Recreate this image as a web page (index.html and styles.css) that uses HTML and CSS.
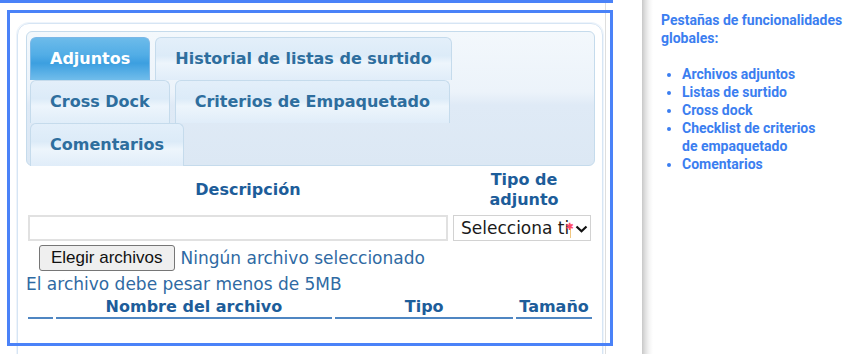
FILE: index.html
```html
<!DOCTYPE html>
<html lang="es">
<head>
    <meta charset="UTF-8">
    <title>Adjuntos</title>
    <link rel="stylesheet" href="styles.css">
</head>
<body>
<div class="page">
    <div class="main">
        <div class="widget">
            <ul class="tabs">
                <li class="tab active">Adjuntos</li>
                <li class="tab">Historial de listas de surtido</li>
                <li class="tab">Cross Dock</li>
                <li class="tab">Criterios de Empaquetado</li>
                <li class="tab">Comentarios</li>
            </ul>
            <div class="panel">
                <table class="upload">
                    <tr>
                        <th class="desc">Descripción</th>
                        <th class="tipo">Tipo de<br>adjunto</th>
                    </tr>
                    <tr>
                        <td><input type="text" class="text"></td>
                        <td>
                            <div class="pick">
                                <select class="sel">
                                    <option>Selecciona tipo</option>
                                </select>
                                <span class="req">&#10033;</span>
                                <svg class="chev" width="13" height="8" viewBox="0 0 13 8"><path d="M1.5 1.5 L6.5 6.3 L11.5 1.5" fill="none" stroke="#111" stroke-width="2.2"/></svg>
                            </div>
                        </td>
                    </tr>
                </table>
                <div class="file_row">
                    <button class="file_btn">Elegir archivos</button>
                    <span>Ningún archivo seleccionado</span>
                </div>
                <p class="hint">El archivo debe pesar menos de 5MB</p>
                <table class="files">
                    <tr>
                        <th class="c0"></th>
                        <th class="c1">Nombre del archivo</th>
                        <th class="c2">Tipo</th>
                        <th class="c3">Tamaño</th>
                    </tr>
                </table>
            </div>
        </div>
    </div>

    <div class="notes">
        <p class="notes_title">Pestañas de funcionalidades globales:</p>
        <ul class="notes_list">
            <li>Archivos adjuntos</li>
            <li>Listas de surtido</li>
            <li>Cross dock</li>
            <li>Checklist de criterios<br>de empaquetado</li>
            <li>Comentarios</li>
        </ul>
    </div>

    <div class="mark mark_top"></div>
    <div class="mark mark_main"></div>
</div>
</body>
</html>
```

FILE: styles.css
```css
* {
    margin: 0;
    padding: 0;
    box-sizing: border-box;
}
body {
    margin: 0;
    background: #fff;
    font-family: "DejaVu Sans", sans-serif;
    overflow: hidden;
}
.page {
    position: relative;
    display: flex;
    width: 857px;
    height: 354px;
    overflow: hidden;
}
.main {
    width: 606px;
    flex: none;
    border-right: 1px solid #dedede;
    padding: 23px 2px 0 17px;
}
.widget {
    width: 586px;
    height: 346px;
    border: 1px solid #d6e5f4;
    border-radius: 12px;
    box-shadow: 0 0 0 1px #eef4fb;
    padding: 7px 7px 0 8px;
}

/* tabs */
.tabs {
    list-style: none;
    display: flex;
    flex-wrap: wrap;
    align-content: flex-start;
    height: 135px;
    padding: 5px 20px 0 3px;
    border: 1px solid #c5dbec;
    border-radius: 6px;
    background: linear-gradient(#f3f8fc 0%, #ecf3fa 45%, #dfeaf6 55%, #dce8f4 100%);
}
.tab {
    height: 43px;
    line-height: 42px;
    padding: 0 19px;
    margin-right: 5px;
    font-size: 16px;
    font-weight: bold;
    color: #2e6e9e;
    border: 1px solid #c5dbec;
    border-bottom: none;
    border-radius: 6px 6px 0 0;
    background: linear-gradient(#e3effa 0%, #dcebf8 42%, #edf5fc 60%, #e0edf9 100%);
    white-space: nowrap;
}
.tab.active {
    color: #fff;
    border-color: #79b7e7;
    background: linear-gradient(#6cbbea 0%, #52ade6 40%, #3c9fe0 60%, #71bdeb 100%);
}

/* panel */
.panel {
    color: #2f6aa3;
    font-size: 17px;
}
.upload {
    border-spacing: 2px;
    margin-left: -1px;
}
.upload th {
    font-size: 16px;
    line-height: 20px;
    color: #1d5d9a;
    padding: 2px 0;
    height: 44px;
}
.upload td {
    padding: 1px;
}
.desc {
    width: 422px;
    padding-left: 20px !important;
}
.tipo {
    padding-left: 5px !important;
}
.text {
    display: block;
    width: 420px;
    height: 26px;
    border: 2px solid #e1e1e1;
    background: #fff;
}
.pick {
    position: relative;
    width: 138px;
    height: 26px;
    margin-left: 1px;
}
.sel {
    appearance: none;
    -webkit-appearance: none;
    width: 138px;
    height: 26px;
    border: 1px solid #d2d2d2;
    background: #fff;
    padding: 0 19px 0 7px;
    font-family: "DejaVu Sans", sans-serif;
    font-size: 17px;
    color: #1b1b1b;
}
.req {
    position: absolute;
    right: 17px;
    top: 6px;
    font-size: 10px;
    color: #ff4a6a;
}
.chev {
    position: absolute;
    right: 3px;
    top: 10px;
}
.file_row {
    display: flex;
    align-items: center;
    height: 26px;
    margin-top: 1px;
}
.file_btn {
    margin-left: 13px;
    margin-right: 6px;
    height: 26px;
    padding: 0 11px;
    font-family: "Liberation Sans", sans-serif;
    font-size: 17px;
    color: #111;
    background: #efefef;
    border: 1px solid #767676;
    border-radius: 3px;
}
.hint {
    line-height: 20px;
    margin-top: 3px;
}
.files {
    border-spacing: 3px 2px;
    margin-left: -1px;
}
.files th {
    font-size: 16px;
    line-height: 20px;
    color: #1d5d9a;
    padding-top: 1px;
    border-bottom: 2px solid #4f86c2;
}
.c0 { width: 25px; }
.c1 { width: 280px; }
.c2 { width: 180px; }
.c3 { width: 76px; }

/* side notes */
.notes {
    flex: 1;
    margin-left: 36px;
    padding: 11px 4px 0 19px;
    background: linear-gradient(90deg, #c8c8c8 0, #dedede 3px, #f4f4f4 7px, #fff 11px);
    font-family: Roboto, sans-serif;
    font-weight: bold;
    font-size: 14px;
    line-height: 18px;
    color: #3b7ef0;
}
.notes_title {
    margin-bottom: 18px;
}
.notes_list {
    padding-left: 21px;
}

/* highlight frames */
.mark {
    position: absolute;
    border: 3px solid #4a82f8;
}
.mark_top {
    left: -10px;
    top: -100px;
    width: 623px;
    height: 103px;
}
.mark_main {
    left: 7px;
    top: 10px;
    width: 606px;
    height: 336px;
}
```
